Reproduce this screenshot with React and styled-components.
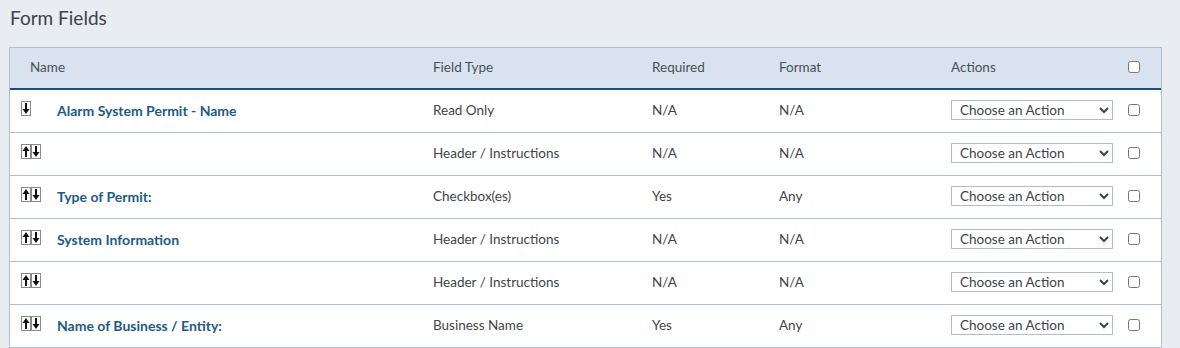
import React from "react";
import styled, { createGlobalStyle } from "styled-components";

const GlobalStyle = createGlobalStyle`
  body {
    margin: 0;
    background-color: #e9edf2;
    font-family: Lato, "Noto Sans", Arial, sans-serif;
    color: #3b3f45;
  }
`;

const Page = styled.div`
  padding: 6px 18px 0 9px;
`;

const Title = styled.h2`
  font-size: 19px;
  font-weight: 400;
  margin: 0 0 17px 1px;
  color: #3d4248;
  line-height: 24px;
`;

const Table = styled.div`
  background-color: #fff;
  border: 1px solid #b3bfcd;
  border-top: none;
`;

const COLS = "413px 219px 127px 172px 177px 1fr";

const HeaderRow = styled.div`
  display: grid;
  grid-template-columns: ${COLS};
  height: 40px;
  align-items: center;
  background-color: #d9e3ef;
  border-top: 1px solid #b3bfcd;
  border-bottom: 2px solid #1f4e79;
  font-size: 13.5px;
  color: #4a4f55;
  padding-bottom: 2px;
  box-sizing: content-box;
  height: 38px;
`;

const Row = styled.div`
  display: grid;
  grid-template-columns: ${COLS};
  height: 42px;
  align-items: center;
  font-size: 13.5px;
  color: #3f444a;
  padding-bottom: 2px;
  box-sizing: border-box;
  &:not(:last-child) {
    border-bottom: 1px solid #b3bfcd;
    height: 43px;
  }
`;

const Cell = styled.div`
  padding-left: ${props => props.$pad || 10}px;
  display: flex;
  align-items: center;
`;

const NameLink = styled.span`
  font-weight: 700;
  font-size: 14px;
  color: #1d5a8a;
  margin-left: 15px;
`;

const Handle = styled.span`
  display: inline-flex;
  width: 21px;
  margin-top: -4px;
`;

const Select = styled.select`
  width: 162px;
  height: 20px;
  border: 1px solid #b4bcc7;
  border-radius: 0;
  background: #fff;
  font-family: inherit;
  font-size: 13.5px;
  color: #3f444a;
  padding: 0 2px 0 4px;
`;

const Check = styled.input`
  margin: 0;
  width: 12px;
  height: 12px;
`;

const DownBox = () => (
  <svg width="10" height="15" viewBox="0 0 10 15">
    <rect x="0.5" y="0.5" width="9" height="14" fill="#fff" stroke="#8a8a8a" />
    <rect x="4" y="2" width="2" height="7" fill="#111" />
    <polygon points="1.5,8 8.5,8 5,13" fill="#111" />
  </svg>
);

const UpDownBox = () => (
  <svg width="20" height="15" viewBox="0 0 20 15">
    <rect x="0.5" y="0.5" width="9" height="14" fill="#fff" stroke="#8a8a8a" />
    <polygon points="1.5,7 8.5,7 5,2" fill="#111" />
    <rect x="4" y="6" width="2" height="7" fill="#111" />
    <rect x="10.5" y="0.5" width="9" height="14" fill="#fff" stroke="#8a8a8a" />
    <rect x="14" y="2" width="2" height="7" fill="#111" />
    <polygon points="11.5,8 18.5,8 15,13" fill="#111" />
  </svg>
);

const fields = [
  { name: "Alarm System Permit - Name", type: "Read Only", req: "N/A", format: "N/A", first: true },
  { name: "", type: "Header / Instructions", req: "N/A", format: "N/A" },
  { name: "Type of Permit:", type: "Checkbox(es)", req: "Yes", format: "Any" },
  { name: "System Information", type: "Header / Instructions", req: "N/A", format: "N/A" },
  { name: "", type: "Header / Instructions", req: "N/A", format: "N/A" },
  { name: "Name of Business / Entity:", type: "Business Name", req: "Yes", format: "Any" },
];

const App = () => {
  return (
    <Page>
      <GlobalStyle />
      <Title>Form Fields</Title>
      <Table>
        <HeaderRow>
          <Cell $pad={20}>Name</Cell>
          <Cell>Field Type</Cell>
          <Cell>Required</Cell>
          <Cell>Format</Cell>
          <Cell>Actions</Cell>
          <Cell>
            <Check type="checkbox" />
          </Cell>
        </HeaderRow>
        {fields.map((f, i) => (
          <Row key={i}>
            <Cell $pad={11}>
              <Handle>{f.first ? <DownBox /> : <UpDownBox />}</Handle>
              {f.name && <NameLink>{f.name}</NameLink>}
            </Cell>
            <Cell>{f.type}</Cell>
            <Cell>{f.req}</Cell>
            <Cell>{f.format}</Cell>
            <Cell>
              <Select defaultValue="">
                <option value="">Choose an Action</option>
                <option value="edit">Edit</option>
                <option value="delete">Delete</option>
              </Select>
            </Cell>
            <Cell>
              <Check type="checkbox" />
            </Cell>
          </Row>
        ))}
      </Table>
    </Page>
  );
};

export default App;
